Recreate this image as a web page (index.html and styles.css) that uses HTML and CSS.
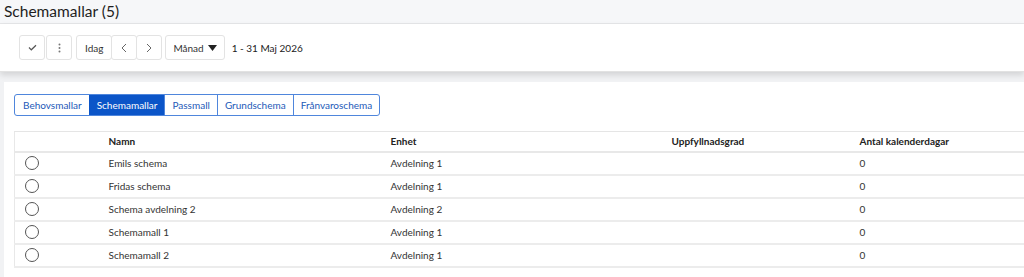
FILE: index.html
```html
<!DOCTYPE html>
<html lang="sv">
<head>
  <meta charset="UTF-8" />
  <title>Schemamallar</title>
  <link rel="stylesheet" href="styles.css">
</head>
<body>

<div class="page-title">Schemamallar (5)</div>

<div class="toolbar">
  <div class="btn-group">
    <button class="btn icon">
      <svg width="9" height="7" viewBox="0 0 9 7"><path d="M1 3.5l2.3 2.3L8 1.2" fill="none" stroke="#555" stroke-width="1.2"/></svg>
    </button>
    <button class="btn icon">
      <svg width="3" height="10" viewBox="0 0 3 10"><circle cx="1.5" cy="1.5" r="1" fill="#777"/><circle cx="1.5" cy="5" r="1" fill="#777"/><circle cx="1.5" cy="8.5" r="1" fill="#777"/></svg>
    </button>
  </div>
  <div class="btn-group joined">
    <button class="btn">Idag</button>
    <button class="btn icon">
      <svg width="6" height="10" viewBox="0 0 6 10"><path d="M5 1L1 5l4 4" fill="none" stroke="#666" stroke-width="1"/></svg>
    </button>
    <button class="btn icon">
      <svg width="6" height="10" viewBox="0 0 6 10"><path d="M1 1l4 4-4 4" fill="none" stroke="#666" stroke-width="1"/></svg>
    </button>
  </div>
  <button class="btn month">Månad
    <svg width="9" height="6" viewBox="0 0 9 6"><path d="M0 0h9L4.5 6z" fill="#222"/></svg>
  </button>
  <span class="range">1 - 31 Maj 2026</span>
</div>

<div class="main">
  <div class="panel">
    <div class="tabs">
      <a class="tab">Behovsmallar</a>
      <a class="tab active">Schemamallar</a>
      <a class="tab">Passmall</a>
      <a class="tab">Grundschema</a>
      <a class="tab">Frånvaroschema</a>
    </div>

    <table class="grid">
      <thead>
        <tr>
          <th class="sel"></th>
          <th class="c-name">Namn</th>
          <th class="c-unit">Enhet</th>
          <th class="c-fill">Uppfyllnadsgrad</th>
          <th>Antal kalenderdagar</th>
        </tr>
      </thead>
      <tbody>
        <tr><td class="sel"><span class="radio"></span></td><td>Emils schema</td><td>Avdelning 1</td><td></td><td>0</td></tr>
        <tr><td class="sel"><span class="radio"></span></td><td>Fridas schema</td><td>Avdelning 1</td><td></td><td>0</td></tr>
        <tr><td class="sel"><span class="radio"></span></td><td>Schema avdelning 2</td><td>Avdelning 2</td><td></td><td>0</td></tr>
        <tr><td class="sel"><span class="radio"></span></td><td>Schemamall 1</td><td>Avdelning 1</td><td></td><td>0</td></tr>
        <tr><td class="sel"><span class="radio"></span></td><td>Schemamall 2</td><td>Avdelning 1</td><td></td><td>0</td></tr>
      </tbody>
    </table>
  </div>
</div>

</body>
</html>
```

FILE: styles.css
```css
* { box-sizing: border-box; }

body {
  margin: 0;
  font-family: 'Lato', 'Open Sans', sans-serif;
  color: #222;
  background: #f1f2f4;
}

.page-title {
  height: 24px;
  padding: 0 0 0 4px;
  background: #f6f7f9;
  border-bottom: 1px solid #e6e7e9;
  font-size: 15.5px;
  line-height: 22px;
  color: #1e1e1e;
}

.toolbar {
  position: relative;
  height: 48px;
  padding: 10px 19px;
  background: #fff;
  display: flex;
  align-items: center;
  gap: 3px;
  box-shadow: 0 3px 6px rgba(0, 0, 0, 0.13);
  border-bottom: 1px solid #e2e2e2;
}

.btn-group { display: flex; gap: 1px; }
.btn-group.joined { gap: 0; margin-left: 1px; }
.btn-group.joined .btn + .btn { margin-left: -1px; }

.btn {
  height: 25px;
  padding: 0 8px;
  border: 1px solid #e3e3e3;
  border-radius: 3px;
  background: #fff;
  font-family: inherit;
  font-size: 10px;
  color: #333;
  display: flex;
  align-items: center;
  gap: 5px;
}

.btn.icon { width: 26px; justify-content: center; padding: 0; }
.btn.month { padding: 0 7px; gap: 4px; }

.range {
  margin-left: 4px;
  font-size: 10px;
  color: #222;
}

.main {
  padding: 10px 0 0 4px;
}

.panel {
  background: #fff;
  padding: 12px 0 10px 10px;
  min-height: 200px;
}

.tabs {
  display: flex;
  width: fit-content;
  border: 1px solid #4f86dc;
  border-radius: 3px;
  overflow: hidden;
}

.tab {
  height: 20px;
  padding: 0 7px;
  font-size: 10px;
  line-height: 20px;
  color: #2359b8;
  border-left: 1px solid #4f86dc;
}
.tab:first-child { border-left: none; padding-left: 8px; }
.tab.active { background: #0b55c8; color: #fff; border-color: #0b55c8; }

.grid {
  margin-top: 15px;
  width: 100%;
  border-collapse: collapse;
  font-size: 10px;
  border-left: 1px solid #e8e8e8;
}

.grid th {
  height: 20px;
  text-align: left;
  font-weight: 700;
  color: #222;
  border-top: 1px solid #e5e5e5;
  border-bottom: 2px solid #e8e8e8;
  padding: 0;
}

.grid td {
  height: 23px;
  padding: 0;
  color: #333;
  border-bottom: 2px solid #ececec;
}

.grid .sel { width: 94px; padding-left: 10px; }
.grid .c-name { width: 282px; }
.grid .c-unit { width: 281px; }
.grid .c-fill { width: 188px; }

.radio {
  display: block;
  width: 14px;
  height: 14px;
  border: 1.3px solid #555;
  border-radius: 50%;
}
```
